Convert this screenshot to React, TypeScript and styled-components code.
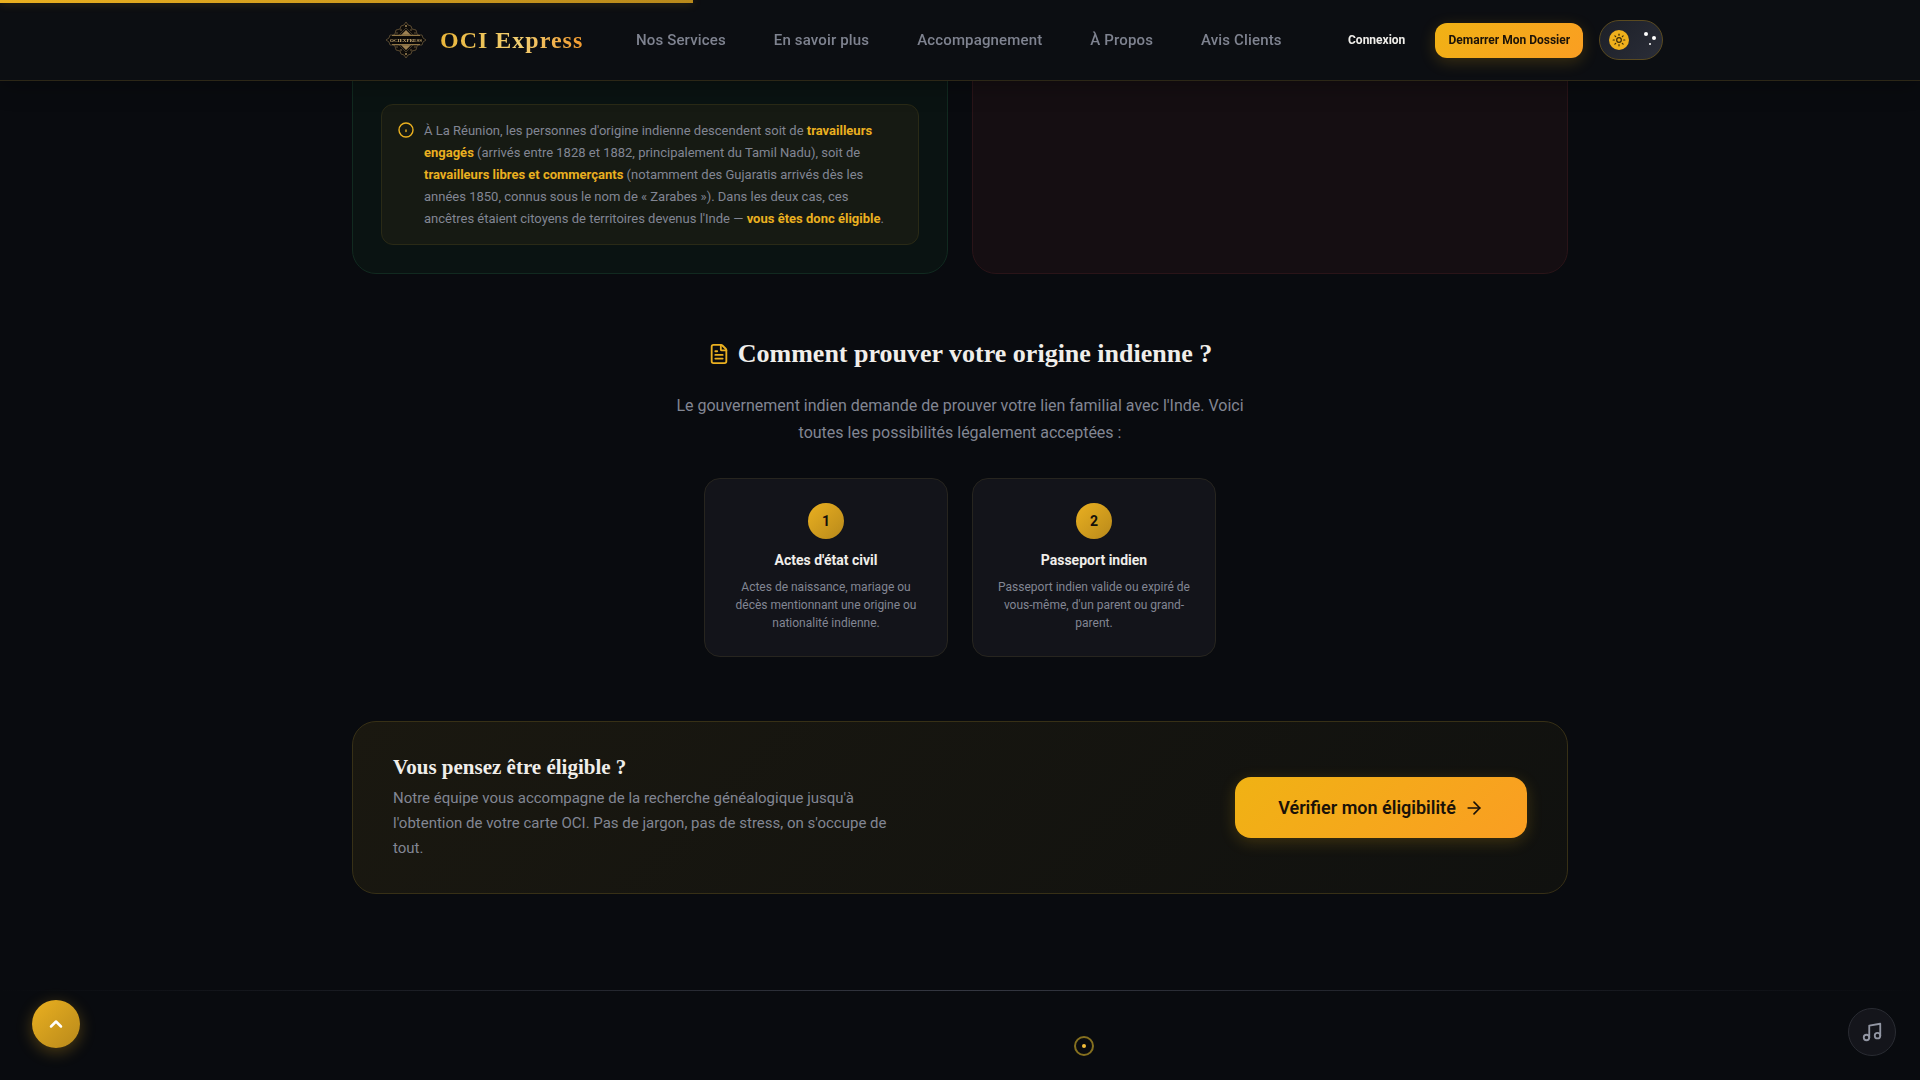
import React from "react";
import styled, { createGlobalStyle } from "styled-components";
import { ArrowRight, ChevronUp, FileText, Music, Sun } from "lucide-react";

const sans = `Roboto, "Noto Sans", "Liberation Sans", sans-serif`;
const serif = `"Liberation Serif", "DejaVu Serif", serif`;
const gold = "#eab020";
const goldDark = "#b8891b";
const muted = "#828693";
const light = "#f0eeea";

const GlobalStyle = createGlobalStyle`
  *, *::before, *::after { box-sizing: border-box; }
  body {
    margin: 0;
    background: #090b0f;
    color: ${light};
    font-family: ${sans};
    overflow-x: hidden;
  }
  h2, h3, p { margin: 0; }
  a { color: inherit; text-decoration: none; }
  button { font-family: inherit; cursor: pointer; }
`;

const Progress = styled.div`
  position: fixed;
  z-index: 20;
  top: 0;
  left: 0;
  width: 36.1%;
  height: 3px;
  background: linear-gradient(90deg, ${gold}, ${goldDark});
  box-shadow: 0 0 10px rgba(234, 176, 32, 0.3);
`;

const Header = styled.header`
  position: fixed;
  z-index: 10;
  top: 0;
  left: 0;
  right: 0;
  background: #0c0e12;
  border-bottom: 1px solid #2c2717;
  box-shadow: 0 4px 24px rgba(0, 0, 0, 0.3);
`;

const HeaderInner = styled.div`
  display: flex;
  align-items: center;
  max-width: 1152px;
  height: 80px;
  margin: 0 auto;
  white-space: nowrap;
  > * { flex-shrink: 0; }
`;

const Brand = styled.a`
  display: flex;
  align-items: center;
  gap: 12px;
  width: 252px;
`;

const BrandName = styled.span`
  font: 700 24px/32px ${serif};
  letter-spacing: 1px;
  background: linear-gradient(90deg, #e9b53a, #f2cf72 55%, #f29a2e);
  background-clip: text;
  color: transparent;
`;

const Nav = styled.nav`
  display: flex;
  gap: 48px;
  width: 712px;
  font-size: 15px;
  font-weight: 500;
  line-height: 24px;
  letter-spacing: 0.01em;
  color: #7f8390;
`;

const Actions = styled.div`
  display: flex;
  align-items: center;
  gap: 16px;
`;

const Login = styled.a`
  margin-right: 14px;
  font-size: 12px;
  font-weight: 700;
  line-height: 20px;
`;

const GoldLink = styled.a<{ $large?: boolean }>`
  display: flex;
  align-items: center;
  justify-content: center;
  gap: 8px;
  flex-shrink: 0;
  min-width: ${(p) => (p.$large ? 292 : 148)}px;
  padding: ${(p) => (p.$large ? "16px 40px" : "8px 12px")};
  border-radius: ${(p) => (p.$large ? 16 : 12)}px;
  background: linear-gradient(135deg, #f0b214, #fa9e22);
  box-shadow: 0 4px 16px rgba(240, 178, 20, 0.2);
  color: #1a1208;
  font-size: ${(p) => (p.$large ? 18 : 12)}px;
  font-weight: ${(p) => (p.$large ? 600 : 700)};
  line-height: ${(p) => (p.$large ? 29 : 19)}px;
`;

const ThemeToggle = styled.button`
  display: flex;
  align-items: center;
  justify-content: space-between;
  width: 64px;
  height: 40px;
  padding: 0 6px 0 9px;
  border: 1px solid #5a4a20;
  border-radius: 20px;
  background: linear-gradient(135deg, #1d2028, #2a2d38);
`;

const Knob = styled.span`
  display: grid;
  place-items: center;
  width: 20px;
  height: 20px;
  border-radius: 50%;
  background: #efb01c;
  color: #3a2b08;
`;

const Container = styled.main`
  max-width: 1280px;
  margin: 0 auto;
  padding: 0 32px 96px;
`;

const Columns = styled.div`
  display: grid;
  grid-template-columns: 1fr 1fr;
  gap: 24px;
`;

const Panel = styled.section<{ $tone: "green" | "red" }>`
  padding: 103px 28px 28px;
  border: 1px solid ${(p) => (p.$tone === "green" ? "#112a20" : "#2a1418")};
  border-radius: 24px;
  background: ${(p) => (p.$tone === "green" ? "#0a1312" : "#150e12")};
`;

const Note = styled.div`
  display: flex;
  gap: 10px;
  padding: 15px 20px 14px 16px;
  border: 1px solid #2a2a16;
  border-radius: 12px;
  background: #161a13;
  color: ${muted};
  font-size: 13px;
  line-height: 22px;
  svg { flex-shrink: 0; margin-top: 2px; color: ${gold}; }
  strong { color: ${gold}; font-weight: 700; }
`;

const Proof = styled.section`
  display: flex;
  flex-direction: column;
  align-items: center;
  padding: 60px 0 64px;
  text-align: center;
`;

const ProofTitle = styled.h2`
  display: flex;
  align-items: center;
  gap: 8px;
  font: 700 26px/40px ${serif};
  svg { color: ${gold}; }
`;

const Lead = styled.p`
  max-width: 600px;
  margin: 18px 0 32px;
  color: ${muted};
  font-size: 16px;
  line-height: 27px;
`;

const ProofGrid = styled.div`
  display: grid;
  grid-template-columns: repeat(2, 244px);
  gap: 24px;
`;

const ProofCard = styled.article`
  display: flex;
  flex-direction: column;
  align-items: center;
  padding: 24px 20px;
  border: 1px solid #27251f;
  border-radius: 16px;
  background: #13141a;
  h3 {
    margin: 12px 0 8px;
    font-size: 14px;
    font-weight: 700;
    line-height: 19px;
  }
  p {
    color: ${muted};
    font-size: 12px;
    line-height: 18px;
  }
`;

const Step = styled.span`
  width: 36px;
  height: 36px;
  border-radius: 50%;
  background: linear-gradient(135deg, ${gold}, ${goldDark});
  color: #14100a;
  font-size: 14px;
  font-weight: 700;
  line-height: 36px;
`;

const Banner = styled.section`
  display: flex;
  align-items: center;
  justify-content: space-between;
  padding: 32px 40px;
  border: 1px solid #373016;
  border-radius: 24px;
  background: linear-gradient(135deg, #1a1810, #10110f);
  h3 {
    margin-bottom: 6px;
    font: 700 21px/26px ${serif};
  }
  p {
    max-width: 520px;
    color: ${muted};
    font-size: 15px;
    line-height: 25px;
  }
`;

const Divider = styled.hr`
  height: 1px;
  margin: 0;
  border: 0;
  background: linear-gradient(90deg, transparent, #343741 50%, transparent);
`;

const Round = styled.button<{ $side: "left" | "right" }>`
  position: fixed;
  z-index: 10;
  display: grid;
  place-items: center;
  width: 48px;
  height: 48px;
  padding: 0;
  border-radius: 50%;
  ${(p) =>
    p.$side === "left"
      ? `left: 32px; bottom: 32px; border: 0; color: #fff;
         background: linear-gradient(135deg, ${gold}, ${goldDark});
         box-shadow: 0 4px 16px rgba(234, 176, 32, 0.3);`
      : `right: 24px; bottom: 24px; border: 1px solid #2a2c33; color: #9296a3;
         background: #14151b;`}
`;

const Pointer = styled.span`
  position: fixed;
  z-index: 15;
  left: 1074px;
  bottom: 24px;
  display: grid;
  place-items: center;
  width: 20px;
  height: 20px;
  border: 2px solid #85701f;
  border-radius: 50%;
  pointer-events: none;
  &::after {
    content: "";
    width: 4px;
    height: 4px;
    border-radius: 50%;
    background: #f2bd3a;
  }
`;

const Emblem = () => (
  <svg width="44" height="44" viewBox="0 0 44 44" fill="none" aria-hidden="true">
    <g stroke="#6a5738" strokeWidth="0.8" fill="#0e0c0a">
      <path d="M22 4l2 3 3 1 1 3 4 1 1 4 3 2H8l3-2 1-4 4-1 1-3 3-1z" />
      <path d="M22 40l2-3 3-1 1-3 4-1 1-4 3-2H8l3 2 1 4 4 1 1 3 3 1z" />
    </g>
    <path d="M22 12l5 5H17zM22 32l5-5H17z" fill="#9c8152" />
    <path d="M22 10l7 7M22 10l-7 7M22 34l7-7M22 34l-7-7" stroke="#4d4230" strokeWidth="0.8" />
    <circle cx="22" cy="8" r="1" fill="#a58a58" />
    <circle cx="22" cy="36" r="1" fill="#a58a58" />
    <g fill="#7d6948">
      <circle cx="17" cy="12" r="0.8" /><circle cx="27" cy="12" r="0.8" />
      <circle cx="17" cy="32" r="0.8" /><circle cx="27" cy="32" r="0.8" />
      <circle cx="13" cy="15" r="0.7" /><circle cx="31" cy="15" r="0.7" />
      <circle cx="13" cy="29" r="0.7" /><circle cx="31" cy="29" r="0.7" />
    </g>
    <path d="M2 22l3-2 1-3h32l1 3 3 2-3 2-1 3H6l-1-3z" fill="#0a0908" stroke="#66553a" strokeWidth="0.8" />
    <path d="M8 17.5h28M8 26.5h28" stroke="#a98a50" strokeWidth="0.8" />
    <text x="22" y="24" textAnchor="middle" fontSize="5" fontWeight="700" fontFamily="Liberation Serif, serif" fill="#c9ab72">
      OCIEXPRESS
    </text>
  </svg>
);

const NoteIcon = () => (
  <svg width="16" height="16" viewBox="0 0 16 16" fill="none" stroke="currentColor" strokeLinecap="round" aria-hidden="true">
    <circle cx="8" cy="8" r="7" strokeWidth="1.4" />
    <path d="M8 8v1.5" strokeWidth="1.4" />
  </svg>
);

const links = ["Nos Services", "En savoir plus", "Accompagnement", "À Propos", "Avis Clients"];

const proofs = [
  {
    title: "Actes d'état civil",
    text: "Actes de naissance, mariage ou décès mentionnant une origine ou nationalité indienne.",
  },
  {
    title: "Passeport indien",
    text: "Passeport indien valide ou expiré de vous-même, d'un parent ou grand-parent.",
  },
];

export default function App() {
  return (
    <>
      <GlobalStyle />
      <Progress />
      <Header>
        <HeaderInner>
          <Brand href="#">
            <Emblem />
            <BrandName>OCI Express</BrandName>
          </Brand>
          <Nav>
            {links.map((label) => (
              <a key={label} href="#">{label}</a>
            ))}
          </Nav>
          <Actions>
            <Login href="#">Connexion</Login>
            <GoldLink href="#">Demarrer Mon Dossier</GoldLink>
            <ThemeToggle type="button" aria-label="Changer de thème">
              <Knob><Sun size={14} strokeWidth={2} /></Knob>
              <svg width="14" height="16" viewBox="0 0 14 16" fill="#fff" aria-hidden="true">
                <circle cx="4" cy="2" r="2" />
                <circle cx="12" cy="6" r="2" />
                <circle cx="8" cy="12" r="1" />
              </svg>
            </ThemeToggle>
          </Actions>
        </HeaderInner>
      </Header>

      <Container>
        <Columns>
          <Panel $tone="green">
            <Note>
              <NoteIcon />
              <p>
                À La Réunion, les personnes d'origine indienne descendent soit de{" "}
                <strong>travailleurs engagés</strong> (arrivés entre 1828 et 1882,
                principalement du Tamil Nadu), soit de{" "}
                <strong>travailleurs libres et commerçants</strong> (notamment des Gujaratis
                arrivés dès les années 1850, connus sous le nom de « Zarabes »). Dans les deux
                cas, ces ancêtres étaient citoyens de territoires devenus l'Inde —{" "}
                <strong>vous êtes donc éligible</strong>.
              </p>
            </Note>
          </Panel>
          <Panel $tone="red" />
        </Columns>

        <Proof>
          <ProofTitle>
            <FileText size={22} />
            Comment prouver votre origine indienne ?
          </ProofTitle>
          <Lead>
            Le gouvernement indien demande de prouver votre lien familial avec l'Inde. Voici
            toutes les possibilités légalement acceptées :
          </Lead>
          <ProofGrid>
            {proofs.map((proof, i) => (
              <ProofCard key={proof.title}>
                <Step>{i + 1}</Step>
                <h3>{proof.title}</h3>
                <p>{proof.text}</p>
              </ProofCard>
            ))}
          </ProofGrid>
        </Proof>

        <Banner>
          <div>
            <h3>Vous pensez être éligible ?</h3>
            <p>
              Notre équipe vous accompagne de la recherche généalogique jusqu'à l'obtention de
              votre carte OCI. Pas de jargon, pas de stress, on s'occupe de tout.
            </p>
          </div>
          <GoldLink href="#" $large>
            Vérifier mon éligibilité
            <ArrowRight size={20} />
          </GoldLink>
        </Banner>
      </Container>
      <Divider />

      <Round type="button" $side="left" aria-label="Retour en haut"><ChevronUp size={20} strokeWidth={3} /></Round>
      <Round type="button" $side="right" aria-label="Musique"><Music size={22} /></Round>
      <Pointer />
    </>
  );
}
